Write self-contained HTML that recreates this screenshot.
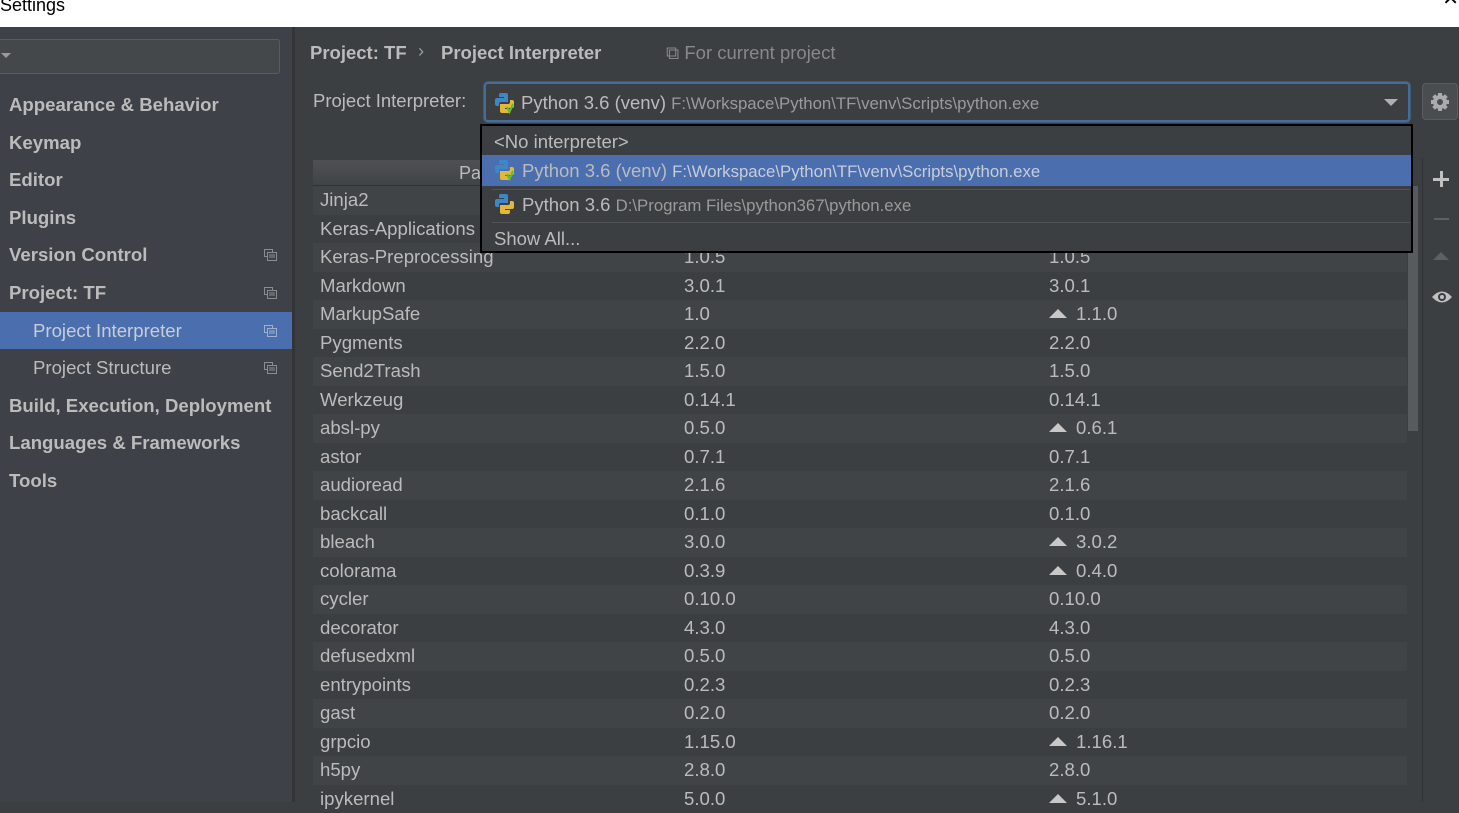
<!DOCTYPE html>
<html><head><meta charset="utf-8"><style>
*{margin:0;padding:0;box-sizing:border-box}
body{width:1459px;height:802px;overflow:hidden;background:#3c3f41;font-family:"Liberation Sans","Noto Sans CJK SC",sans-serif;color:#bbbbbb;position:relative}
.title{position:absolute;left:0;top:0;width:1459px;height:27px;background:#fff;color:#000;font-size:18px;line-height:10px;padding-left:0}
.close{position:absolute;right:0;top:-6px;font-size:20px;color:#000}
.side{position:absolute;left:0;top:27px;width:292px;height:775px;background:#3e4147}
.divider{position:absolute;left:292px;top:27px;width:3px;height:775px;background:#323437}
.search{position:absolute;left:-4px;top:12px;width:284px;height:35px;border:1px solid #5a5d60;border-radius:3px;background:#45484b}
.search:before{content:"";position:absolute;left:4px;top:13px;border-left:5px solid transparent;border-right:5px solid transparent;border-top:5px solid #9a9a9a}
.nav{position:absolute;left:0;width:292px;height:37px;line-height:37px;font-size:18.6px;font-weight:bold;padding-left:9px;color:#bbbbbb;white-space:nowrap}
.nav.sub{font-weight:normal;padding-left:33px}
.nav.sel{background:#4b6eaf;color:#c8cdd6}
.cp{position:absolute;right:15px;top:13px;width:13px;height:12px}
.main{position:absolute;left:295px;top:27px;right:0;bottom:0;background:#3c3f41}
.bc{position:absolute;top:15px;font-size:18.5px;font-weight:bold;color:#bbbbbb}
.lbl{position:absolute;left:313px;top:90px;font-size:18.5px}
.combo{position:absolute;left:484px;top:82px;width:926px;height:40px;border:2px solid #466d94;border-radius:4px;background:#3c3f41;box-shadow:0 0 0 1px #3d5a7a}
.combo .t{position:absolute;left:35px;top:8px;font-size:18.5px;white-space:nowrap}
.path{font-size:16.8px;color:#9a9a9a}
.arrow{position:absolute;right:10px;top:15px;border-left:7px solid transparent;border-right:7px solid transparent;border-top:7px solid #b0b0b0}
.gear{position:absolute;left:1422px;top:83px;width:36px;height:37px;border:1px solid #5a5d60;border-radius:4px;background:#4a4d50}
.tbl{position:absolute;left:313px;top:160px;width:1094px}
.hdr{height:26px;background:linear-gradient(#4e5153,#414446);border-bottom:1px solid #2f3133;font-size:18px;line-height:26px;position:relative}
.hdr span{position:absolute;left:146px;top:0}
.r{height:28.5px;line-height:28px;font-size:18.6px;position:relative;white-space:nowrap}
.r:nth-child(even){background:#3c3f41}
.r:nth-child(odd){background:#414446}
.r span{position:absolute;top:0}
.r .a{left:7px}.r .b{left:371px}.r .c{left:736px}
.up{display:inline-block;width:0;height:0;border-left:9px solid transparent;border-right:9px solid transparent;border-bottom:9px solid #c8c8c8;margin-right:9px;vertical-align:2px}
.scroll{position:absolute;left:1407px;top:186px;width:13px;height:616px;background:#3c3f41}
.thumb{position:absolute;left:1408px;top:186px;width:10px;height:245px;background:#585b5e}
.vline{position:absolute;left:1422px;top:158px;width:1px;height:644px;background:#2f3133}
.pop{position:absolute;left:480px;top:124px;width:933px;height:129px;background:#3c3f41;border:2px solid #000}
.it{position:absolute;left:0;width:929px;height:31px;font-size:18.5px;line-height:31px;padding-left:12px;white-space:nowrap}
.sep{position:absolute;left:10px;width:918px;height:1px;background:#515457}
.py{display:inline-block;vertical-align:-4px;margin-right:6px}
</style></head><body>
<div class="title">Settings<span class="close">✕</span></div>
<div class="side">
<div class="search"></div>
<div class="nav" style="top:59px">Appearance &amp; Behavior</div>
<div class="nav" style="top:97px">Keymap</div>
<div class="nav" style="top:134px">Editor</div>
<div class="nav" style="top:172px">Plugins</div>
<div class="nav" style="top:209px">Version Control<svg class="cp" viewBox="0 0 13 12"><rect x="0.5" y="0.5" width="8" height="7" fill="none" stroke="#8a8d90"/><rect x="3.5" y="3.5" width="9" height="8" fill="#3e4147" stroke="#8a8d90"/><path d="M5 6h6M5 8h6" stroke="#8a8d90"/></svg></div>
<div class="nav" style="top:247px">Project: TF<svg class="cp" viewBox="0 0 13 12"><rect x="0.5" y="0.5" width="8" height="7" fill="none" stroke="#8a8d90"/><rect x="3.5" y="3.5" width="9" height="8" fill="#3e4147" stroke="#8a8d90"/><path d="M5 6h6M5 8h6" stroke="#8a8d90"/></svg></div>
<div class="nav sub sel" style="top:285px">Project Interpreter<svg class="cp" viewBox="0 0 13 12"><rect x="0.5" y="0.5" width="8" height="7" fill="none" stroke="#9fb0cf"/><rect x="3.5" y="3.5" width="9" height="8" fill="#4b6eaf" stroke="#9fb0cf"/><path d="M5 6h6M5 8h6" stroke="#9fb0cf"/></svg></div>
<div class="nav sub" style="top:322px">Project Structure<svg class="cp" viewBox="0 0 13 12"><rect x="0.5" y="0.5" width="8" height="7" fill="none" stroke="#8a8d90"/><rect x="3.5" y="3.5" width="9" height="8" fill="#3e4147" stroke="#8a8d90"/><path d="M5 6h6M5 8h6" stroke="#8a8d90"/></svg></div>
<div class="nav" style="top:360px">Build, Execution, Deployment</div>
<div class="nav" style="top:397px">Languages &amp; Frameworks</div>
<div class="nav" style="top:435px">Tools</div>
</div>
<div class="divider"></div>
<div class="main"></div>
<div class="bc" style="left:310px;top:42px">Project: TF</div>
<div class="bc" style="left:418px;top:40px;font-weight:normal;color:#999">›</div>
<div class="bc" style="left:441px;top:42px">Project Interpreter</div>
<div style="position:absolute;left:666px;top:42px;font-size:18.5px;color:#888">⧉ For current project</div>
<div class="lbl">Project Interpreter:</div>
<div class="combo">
<svg style="position:absolute;left:8px;top:8px" width="22" height="22" viewBox="0 0 22 22"><path d="M6 1h6a2 2 0 0 1 2 2v7H7a2 2 0 0 0-2 2v2H3a2 2 0 0 1-2-2V8a2 2 0 0 1 2-2h7V5H5V3a2 2 0 0 1 1-2z" fill="#3f86c8"/><path d="M16 8h2a2 2 0 0 1 2 2v4a2 2 0 0 1-2 2h-7v1h5v2a2 2 0 0 1-2 2H8a2 2 0 0 1-2-2v-7h8a2 2 0 0 0 2-2z" fill="#e3b73a"/><path d="M13 15l2.5 5 3.5-8" stroke="#5cc02b" stroke-width="2" fill="none"/></svg>
<div class="t">Python 3.6 (venv) <span class="path">F:\Workspace\Python\TF\venv\Scripts\python.exe</span></div>
<div class="arrow"></div></div>
<div class="gear"><svg width="36" height="36" viewBox="0 0 36 36"><g fill="#a9abad"><circle cx="17" cy="18" r="7"/><rect x="15" y="9" width="4" height="18"/><rect x="8" y="16" width="18" height="4"/><rect x="15" y="9" width="4" height="18" transform="rotate(45 17 18)"/><rect x="15" y="9" width="4" height="18" transform="rotate(-45 17 18)"/></g><circle cx="17" cy="18" r="3" fill="#4a4d50"/></svg></div>
<div class="tbl">
<div class="hdr"><span>Package</span></div>
<div>
<div class="r"><span class="a">Jinja2</span><span class="b">2.10</span><span class="c">2.10</span></div>
<div class="r"><span class="a">Keras-Applications</span><span class="b">1.0.6</span><span class="c">1.0.6</span></div>
<div class="r"><span class="a">Keras-Preprocessing</span><span class="b">1.0.5</span><span class="c">1.0.5</span></div>
<div class="r"><span class="a">Markdown</span><span class="b">3.0.1</span><span class="c">3.0.1</span></div>
<div class="r"><span class="a">MarkupSafe</span><span class="b">1.0</span><span class="c"><i class="up"></i>1.1.0</span></div>
<div class="r"><span class="a">Pygments</span><span class="b">2.2.0</span><span class="c">2.2.0</span></div>
<div class="r"><span class="a">Send2Trash</span><span class="b">1.5.0</span><span class="c">1.5.0</span></div>
<div class="r"><span class="a">Werkzeug</span><span class="b">0.14.1</span><span class="c">0.14.1</span></div>
<div class="r"><span class="a">absl-py</span><span class="b">0.5.0</span><span class="c"><i class="up"></i>0.6.1</span></div>
<div class="r"><span class="a">astor</span><span class="b">0.7.1</span><span class="c">0.7.1</span></div>
<div class="r"><span class="a">audioread</span><span class="b">2.1.6</span><span class="c">2.1.6</span></div>
<div class="r"><span class="a">backcall</span><span class="b">0.1.0</span><span class="c">0.1.0</span></div>
<div class="r"><span class="a">bleach</span><span class="b">3.0.0</span><span class="c"><i class="up"></i>3.0.2</span></div>
<div class="r"><span class="a">colorama</span><span class="b">0.3.9</span><span class="c"><i class="up"></i>0.4.0</span></div>
<div class="r"><span class="a">cycler</span><span class="b">0.10.0</span><span class="c">0.10.0</span></div>
<div class="r"><span class="a">decorator</span><span class="b">4.3.0</span><span class="c">4.3.0</span></div>
<div class="r"><span class="a">defusedxml</span><span class="b">0.5.0</span><span class="c">0.5.0</span></div>
<div class="r"><span class="a">entrypoints</span><span class="b">0.2.3</span><span class="c">0.2.3</span></div>
<div class="r"><span class="a">gast</span><span class="b">0.2.0</span><span class="c">0.2.0</span></div>
<div class="r"><span class="a">grpcio</span><span class="b">1.15.0</span><span class="c"><i class="up"></i>1.16.1</span></div>
<div class="r"><span class="a">h5py</span><span class="b">2.8.0</span><span class="c">2.8.0</span></div>
<div class="r"><span class="a">ipykernel</span><span class="b">5.0.0</span><span class="c"><i class="up"></i>5.1.0</span></div>
</div></div>
<div class="scroll"></div><div class="thumb"></div><div class="vline"></div>
<div style="position:absolute;left:1433px;top:178px;width:16px;height:2.5px;background:#c0c0c0"></div>
<div style="position:absolute;left:1440px;top:171px;width:2.5px;height:16px;background:#c0c0c0"></div>
<div style="position:absolute;left:1434px;top:218px;width:15px;height:2px;background:#5e6164"></div>
<div style="position:absolute;left:1433px;top:252px;border-left:8px solid transparent;border-right:8px solid transparent;border-bottom:8px solid #5e6164"></div>
<svg style="position:absolute;left:1431px;top:289px" width="22" height="16" viewBox="0 0 22 16"><path d="M1 8Q11 -3 21 8Q11 19 1 8z" fill="#c0c0c0"/><circle cx="11" cy="8" r="4" fill="#3c3f41"/><circle cx="11" cy="8" r="2" fill="#c0c0c0"/></svg>
<div class="pop">
<div class="it" style="top:0">&lt;No interpreter&gt;</div>
<div class="it" style="top:29px;background:#4b6eaf"><svg class="py" width="22" height="22" viewBox="0 0 22 22"><path d="M6 1h6a2 2 0 0 1 2 2v7H7a2 2 0 0 0-2 2v2H3a2 2 0 0 1-2-2V8a2 2 0 0 1 2-2h7V5H5V3a2 2 0 0 1 1-2z" fill="#3f86c8"/><path d="M16 8h2a2 2 0 0 1 2 2v4a2 2 0 0 1-2 2h-7v1h5v2a2 2 0 0 1-2 2H8a2 2 0 0 1-2-2v-7h8a2 2 0 0 0 2-2z" fill="#e3b73a"/><path d="M13 15l2.5 5 3.5-8" stroke="#5cc02b" stroke-width="2" fill="none"/></svg>Python 3.6 (venv) <span class="path" style="color:#c8cdd6">F:\Workspace\Python\TF\venv\Scripts\python.exe</span></div>
<div class="sep" style="top:63px"></div>
<div class="it" style="top:63px"><svg class="py" width="22" height="22" viewBox="0 0 22 22"><path d="M6 1h6a2 2 0 0 1 2 2v7H7a2 2 0 0 0-2 2v2H3a2 2 0 0 1-2-2V8a2 2 0 0 1 2-2h7V5H5V3a2 2 0 0 1 1-2z" fill="#3f86c8"/><path d="M16 8h2a2 2 0 0 1 2 2v4a2 2 0 0 1-2 2h-7v1h5v2a2 2 0 0 1-2 2H8a2 2 0 0 1-2-2v-7h8a2 2 0 0 0 2-2z" fill="#e3b73a"/></svg>Python 3.6 <span class="path">D:\Program Files\python367\python.exe</span></div>
<div class="sep" style="top:96px"></div>
<div class="it" style="top:97px">Show All...</div>
</div>
</body></html>
